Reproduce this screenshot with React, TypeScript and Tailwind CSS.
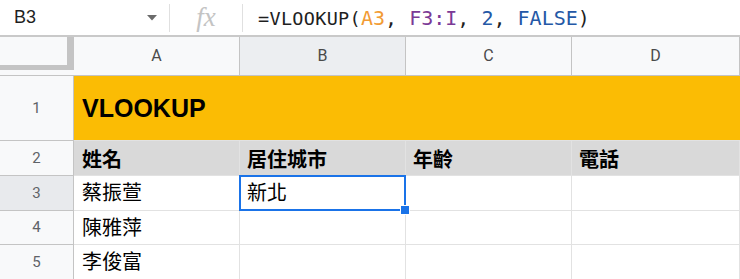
const SANS = "font-['Liberation_Sans','Noto_Sans_CJK_TC',sans-serif]";
const HEAD = "font-['Roboto','Liberation_Sans',sans-serif]";

const COLS = ["A", "B", "C", "D"];

const ROWS = [
  { n: 2, h: "h-[35px]", cells: ["姓名", "居住城市", "年齡", "電話"], header: true },
  { n: 3, h: "h-[35px]", cells: ["蔡振萱", "新北", "", ""] },
  { n: 4, h: "h-[34px]", cells: ["陳雅萍", "", "", ""] },
  { n: 5, h: "h-[35px]", cells: ["李俊富", "", "", ""] },
];

function FormulaBar() {
  return (
    <div className="flex h-[37px] items-center border-b-2 border-[#c9c9c9] bg-white">
      <div className={`flex w-[169px] items-center pl-[14px] pr-[12px] ${SANS}`}>
        <span className="text-[18px] text-[#1f1f1f]">B3</span>
        <svg className="ml-auto" width="10" height="6" viewBox="0 0 10 6">
          <path d="M0 0h10L5 5.5z" fill="#6b6b6b" />
        </svg>
      </div>
      <div className="h-[28px] w-px bg-[#e0e0e0]" />
      <div className="flex w-[72px] justify-center">
        <span className="font-['Liberation_Serif',serif] text-[27px] italic leading-none text-[#c4c4c4]">
          fx
        </span>
      </div>
      <div className="h-[28px] w-px bg-[#e0e0e0]" />
      <div className="flex items-baseline pl-[15px] font-['DejaVu_Sans_Mono',monospace] text-[#1f1f1f]">
        <span className="text-[18.5px] tracking-[0.3px]">=VLOOKUP(</span>
        <span className="text-[20px]">
          <span className="text-[#f29b34]">A3</span>,{" "}
          <span className="text-[#7b3a96]">F3:I</span>,{" "}
          <span className="text-[#2458a6]">2</span>,{" "}
          <span className="text-[#2458a6]">FALSE</span>)
        </span>
      </div>
    </div>
  );
}

export default function App() {
  return (
    <div className="h-[279px] w-[740px] overflow-hidden bg-white">
      <FormulaBar />
      <div className="grid grid-cols-[74px_166px_166px_166px_168px]">
        {/* column headers */}
        <div className="h-[39px] border-b border-[#c4c4c4] bg-[#f8f9fa]">
          <div className="h-[33px] w-[74px] border-r-[7px] border-b-[5px] border-[#c4c4c4]" />
        </div>
        {COLS.map((c) => (
          <div
            key={c}
            className={`flex h-[39px] items-center justify-center border-r border-b border-[#c4c4c4] text-[16px] text-[#4a4a4a] ${HEAD} ${
              c === "B" ? "bg-[#eceef1]" : "bg-[#f8f9fa]"
            }`}
          >
            {c}
          </div>
        ))}

        {/* row 1 */}
        <div
          className={`flex h-[65px] items-center justify-center border-r border-b border-[#c4c4c4] bg-[#f8f9fa] text-[15px] text-[#5f6368] ${HEAD}`}
        >
          1
        </div>
        <div
          className={`col-span-4 flex h-[65px] items-center border-b border-[#e2e2e2] bg-[#fbbc04] pl-[8px] pt-[1px] text-[25px] font-bold text-black ${SANS}`}
        >
          VLOOKUP
        </div>

        {ROWS.map((r) => (
          <div key={r.n} className="contents">
            <div
              className={`flex ${r.h} items-center justify-center border-r border-b border-[#c4c4c4] text-[15px] text-[#5f6368] ${HEAD} ${
                r.n === 3 ? "bg-[#e8eaed]" : "bg-[#f8f9fa]"
              }`}
            >
              {r.n}
            </div>
            {r.cells.map((t, i) => (
              <div
                key={i}
                className={`relative flex ${r.h} items-center border-r border-b border-[#e2e2e2] pl-[7px] text-[20px] text-black ${SANS} ${
                  r.header ? "bg-[#d9d9d9] pt-[4px] font-bold" : "bg-white"
                } ${i === 0 ? "pl-[8px]" : ""} ${r.n === 3 && i === 1 ? "z-10" : ""}`}
              >
                {t}
                {r.n === 3 && i === 1 && (
                  <>
                    <div className="absolute -top-px -left-px h-[36px] w-[167px] border-2 border-[#1a73e8]" />
                    <div className="absolute -right-[5px] -bottom-[5px] h-[10px] w-[10px] border border-white bg-[#1a73e8]" />
                  </>
                )}
              </div>
            ))}
          </div>
        ))}
      </div>
    </div>
  );
}
